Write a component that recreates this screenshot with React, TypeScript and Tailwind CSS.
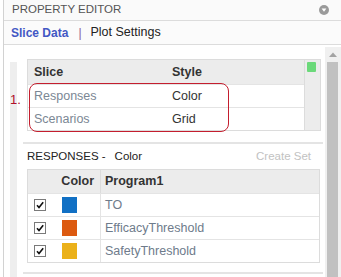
import React from 'react';

const responses = [
  { name: 'TO', color: 'bg-[#1170c4]' },
  { name: 'EfficacyThreshold', color: 'bg-[#dc5a10]' },
  { name: 'SafetyThreshold', color: 'bg-[#ebb11a]' },
];

function Check() {
  return (
    <div className="flex h-[12px] w-[12px] items-center justify-center border border-[#7a7a7a] bg-white">
      <svg width="10" height="10" viewBox="0 0 10 10">
        <path d="M2 5.2 L4 7.5 L8.2 2.2" fill="none" stroke="#111" strokeWidth="1.6" />
      </svg>
    </div>
  );
}

export default function App() {
  return (
    <div className="relative flex h-[277px] w-[341px] overflow-hidden bg-white font-['Liberation_Sans',Arial,sans-serif]">
      <div className="w-[3px]" />
      <div className="flex flex-1 flex-col border-l border-[#d2d2d2]">
        {/* header */}
        <div className="flex h-[21px] items-center justify-between border-b border-[#dcdcdc] bg-[#fafafa] pl-[8px] pr-[12px]">
          <span className="text-[11.5px] text-[#555]">PROPERTY EDITOR</span>
          <svg width="10" height="10" viewBox="0 0 10 10">
            <circle cx="5" cy="5" r="5" fill="#9a9a9a" />
            <path d="M2.6 3.6 L7.4 3.6 L5 6.8 Z" fill="#fff" />
          </svg>
        </div>
        {/* tabs */}
        <div className="flex h-[24px] items-center border-b border-[#dcdcdc] bg-[#fbfbfb] pl-[7px]">
          <span className="text-[12px] font-bold text-[#4358c4]">Slice Data</span>
          <span className="ml-[10px] text-[12px] text-[#8a5d98]">|</span>
          <span className="ml-[9px] text-[12.5px] text-[#222]">Plot Settings</span>
        </div>
        {/* body */}
        <div className="flex flex-1">
          <div className="flex flex-1">
            <div className="ml-[6px] mt-[17px] w-[7px] bg-[#eeeeee]" />
            <div className="ml-[6px] flex w-[300px] flex-col pt-[14px]">
              <div className="flex pl-[4px]">
                <div className="w-[278px] border border-[#dcdcdc] text-[12.5px]">
                  <div className="flex h-[24px] items-center bg-[#ececec] pl-[6px] font-bold text-[#333]">
                    <span className="w-[138px]">Slice</span>
                    <span>Style</span>
                  </div>
                  <div className="flex h-[23px] items-center border-t border-[#e4e4e4] pl-[6px]">
                    <span className="w-[138px] text-[#7b8794]">Responses</span>
                    <span className="text-[#333]">Color</span>
                  </div>
                  <div className="flex h-[23px] items-center border-t border-[#e4e4e4] pl-[6px]">
                    <span className="w-[138px] text-[#7b8794]">Scenarios</span>
                    <span className="text-[#333]">Grid</span>
                  </div>
                </div>
                <div className="w-[16px] border-y border-r border-[#dcdcdc] bg-[#ececec] pl-[2px] pt-[2px]">
                  <div className="h-[10px] w-[9px] rounded-[1px] bg-[#6bd97a]" />
                </div>
              </div>
              <div className="mt-[11px] h-[2px] bg-[#e4e4e4]" />
              <div className="flex h-[25px] items-center justify-between pl-[4px] pr-[12px] text-[11.5px]">
                <span className="text-[#222]">
                  RESPONSES -<span className="ml-[9px]">Color</span>
                </span>
                <span className="text-[#c2c2c2]">Create Set</span>
              </div>
              <div className="ml-[4px] w-[293px] border border-[#dcdcdc] text-[12.5px]">
                <div className="flex h-[23px] items-center bg-[#ececec] font-bold text-[#333]">
                  <span className="flex w-[72px] justify-end pr-[6px]">Color</span>
                  <span className="flex h-full items-center border-l border-[#dcdcdc] pl-[4px]">Program1</span>
                </div>
                {responses.map((r) => (
                  <div key={r.name} className="flex h-[23px] border-t border-[#e4e4e4]">
                    <div className="flex w-[30px] items-center pl-[6px]">
                      <Check />
                    </div>
                    <div className="flex w-[42px] items-center pl-[4px]">
                      <div className={`h-[16px] w-[15px] ${r.color}`} />
                    </div>
                    <div className="flex flex-1 items-center border-l border-[#e4e4e4] pl-[4px] text-[#6e7b8b]">
                      {r.name}
                    </div>
                  </div>
                ))}
              </div>
              <div className="mt-[9px] h-[2px] bg-[#e4e4e4]" />
            </div>
          </div>
          {/* scrollbar */}
          <div className="mt-[2px] flex w-[16px] flex-col bg-[#f0f0f0]">
            <div className="flex h-[15px] items-center justify-center">
              <svg width="8" height="5" viewBox="0 0 8 5">
                <path d="M0 5 L4 0.5 L8 5 Z" fill="#a3a3a3" />
              </svg>
            </div>
            <div className="ml-[2px] w-[11px] flex-1 bg-[#c1c1c1]" />
          </div>
        </div>
      </div>
      {/* annotation overlay */}
      <div className="absolute left-[29px] top-[83px] h-[49px] w-[200px] rounded-[8px] border border-[#c41e2e]" />
      <span className="absolute left-[10px] top-[90px] text-[13px] text-[#b0102a]">1.</span>
    </div>
  );
}
